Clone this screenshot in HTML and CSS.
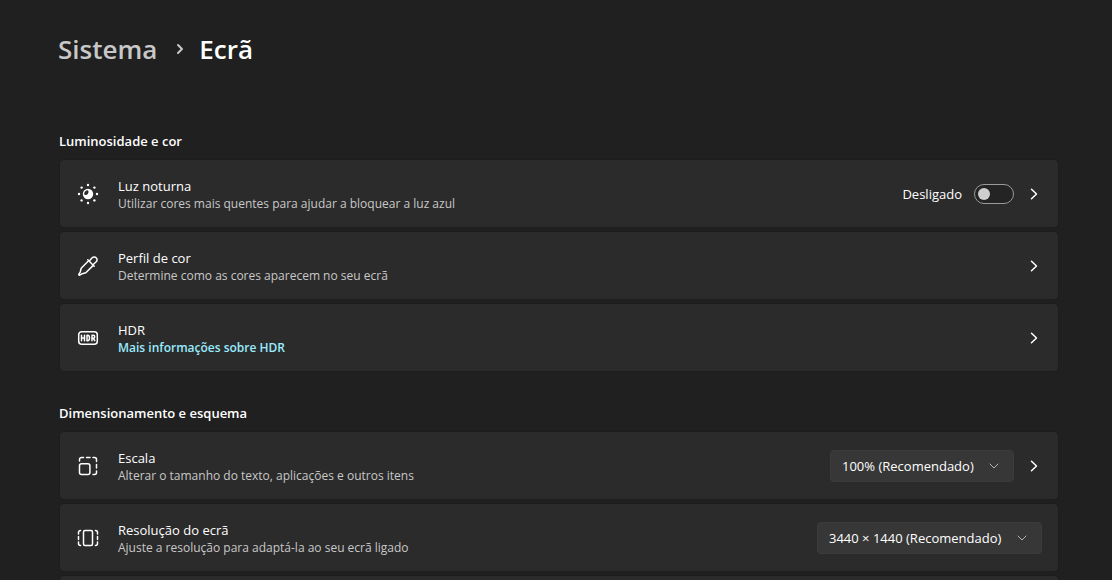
FILE: index.html
```html
<!DOCTYPE html>
<html lang="pt">
<head>
<meta charset="utf-8">
<meta name="viewport" content="width=device-width, initial-scale=1">
<title>Sistema › Ecrã</title>
<link rel="stylesheet" href="styles.css">
</head>
<body>
<main class="page">
  <nav class="breadcrumb">
    <a class="crumb" href="#sistema">Sistema</a>
    <svg class="crumb-arrow" viewBox="0 0 10 14" aria-hidden="true"><path d="M3 3l4 4-4 4"/></svg>
    <h1 class="crumb-current">Ecrã</h1>
  </nav>

  <section class="group">
    <h2 class="group-title">Luminosidade e cor</h2>
    <div class="card">
      <svg class="icon" viewBox="0 0 22 22" aria-hidden="true">
        <circle class="solid" cx="11" cy="11" r="5.2"/>
        <path class="shade" d="M11 7.200a3 3 0 0 1-3.800 4.400A3.800 3.800 0 0 1 11 7.200z"/>
        <g class="solid"><circle cx="11" cy="2" r="1.2"/><circle cx="11" cy="20" r="1.2"/><circle cx="2" cy="11" r="1.2"/><circle cx="20" cy="11" r="1.2"/><circle cx="4.6" cy="4.6" r="1.2"/><circle cx="17.4" cy="4.6" r="1.2"/><circle cx="4.6" cy="17.4" r="1.2"/><circle cx="17.4" cy="17.4" r="1.2"/></g>
      </svg>
      <div class="text">
        <label class="name" for="night">Luz noturna</label>
        <p class="desc">Utilizar cores mais quentes para ajudar a bloquear a luz azul</p>
      </div>
      <label class="state" for="night">Desligado</label>
      <input class="toggle" id="night" type="checkbox" role="switch">
      <button class="open" aria-label="Abrir luz noturna"><svg class="chevron" viewBox="0 0 8 12" aria-hidden="true"><path d="M1.5 1.2l5 4.8-5 4.8"/></svg></button>
    </div>
    <div class="card">
      <svg class="icon" viewBox="0 0 22 22" aria-hidden="true">
        <path d="M10.800 4.800l6.400 6.400M12.300 6l2.900-3.200a2.700 2.700 0 0 1 4 0 2.700 2.700 0 0 1 0 4L16 9.700"/>
        <path d="M11.600 5.800L4.200 13.200l-.9 3.600-1.600 2.800.7.700 2.800-1.600 3.600-.9 7.400-7.400"/>
      </svg>
      <div class="text">
        <h3 class="name">Perfil de cor</h3>
        <p class="desc">Determine como as cores aparecem no seu ecrã</p>
      </div>
      <button class="open" aria-label="Abrir perfil de cor"><svg class="chevron" viewBox="0 0 8 12" aria-hidden="true"><path d="M1.5 1.2l5 4.8-5 4.8"/></svg></button>
    </div>
    <div class="card">
      <svg class="icon" viewBox="0 0 22 22" aria-hidden="true">
        <rect x="1.700" y="4.700" width="18.600" height="12.600" rx="3"/>
        <path d="M4.500 8.300v5.400M7.500 8.300v5.400M4.500 11h3M10 8.300v5.400h.6c1.400 0 1.900-1.100 1.900-2.700s-.5-2.700-1.900-2.700zM15 13.700V8.300h1.200c2 0 2 3 0 3H15M16.300 11.300l1.500 2.400"/>
      </svg>
      <div class="text">
        <h3 class="name">HDR</h3>
        <p class="desc"><a class="link" href="#hdr">Mais informações sobre HDR</a></p>
      </div>
      <button class="open" aria-label="Abrir HDR"><svg class="chevron" viewBox="0 0 8 12" aria-hidden="true"><path d="M1.5 1.2l5 4.8-5 4.8"/></svg></button>
    </div>
  </section>

  <section class="group">
    <h2 class="group-title">Dimensionamento e esquema</h2>
    <div class="card">
      <svg class="icon" viewBox="0 0 22 22" aria-hidden="true">
        <rect x="2.500" y="8.800" width="10.400" height="10.700" rx="2"/>
        <path d="M2.500 6V4.500a2 2 0 0 1 2-2H6.500M9.500 2.500h3.500M16 2.500h1.500a2 2 0 0 1 2 2V6.500M19.500 9.500v3.500M19.500 16v1.500a2 2 0 0 1-2 2H16"/>
      </svg>
      <div class="text">
        <label class="name" for="scale">Escala</label>
        <p class="desc">Alterar o tamanho do texto, aplicações e outros itens</p>
      </div>
      <div class="picker">
        <select class="select" id="scale"><option>100% (Recomendado)</option></select>
        <svg class="caret" viewBox="0 0 10 6" aria-hidden="true"><path d="M1 1l4 4 4-4"/></svg>
      </div>
      <button class="open" aria-label="Abrir escala"><svg class="chevron" viewBox="0 0 8 12" aria-hidden="true"><path d="M1.5 1.2l5 4.8-5 4.8"/></svg></button>
    </div>
    <div class="card">
      <svg class="icon" viewBox="0 0 22 22" aria-hidden="true">
        <rect x="6.500" y="3.500" width="9" height="15" rx="1.500"/>
        <path d="M3.600 3.500h-.1a2 2 0 0 0-2 2V7M1.500 9.500v3M1.500 15v1.500a2 2 0 0 0 2 2h.1M18.400 3.500h.1a2 2 0 0 1 2 2V7M20.500 9.500v3M20.500 15v1.500a2 2 0 0 1-2 2h-.1"/>
      </svg>
      <div class="text">
        <label class="name" for="resolution">Resolução do ecrã</label>
        <p class="desc">Ajuste a resolução para adaptá-la ao seu ecrã ligado</p>
      </div>
      <div class="picker">
        <select class="select" id="resolution"><option>3440 × 1440 (Recomendado)</option></select>
        <svg class="caret" viewBox="0 0 10 6" aria-hidden="true"><path d="M1 1l4 4 4-4"/></svg>
      </div>
    </div>
    <div class="card"></div>
  </section>
</main>
</body>
</html>
```
FILE: styles.css
```css
* { box-sizing: border-box; }
html { height: 100%; overflow: hidden; background: #202020; }
body {
  margin: 0;
  height: 100%;
  overflow: hidden;
  background: #202020;
  color: #fff;
  font: 13px/20px "Open Sans", "Noto Sans", sans-serif;
}
h1, h2, h3, p { margin: 0; }
.page { padding: 30px 54px 0 60px; }
.breadcrumb {
  display: flex;
  align-items: center;
  height: 38px;
  margin: 0 0 63px -2px;
  font-size: 26px;
  line-height: 38px;
}
.crumb { color: #c8c8c8; font-weight: 600; text-decoration: none; }
.crumb-arrow { width: 10px; height: 14px; margin: 0 14px 0 18px; stroke: #c8c8c8; stroke-width: 2; }
.crumb-current { font-size: 26px; font-weight: 600; }
svg { flex: none; fill: none; stroke: #fff; stroke-width: 1.5; stroke-linecap: round; stroke-linejoin: round; }
.group { display: flex; flex-direction: column; gap: 5px; margin-bottom: 32px; }
.group-title { margin: 0 0 3px -1px; font-size: 13px; line-height: 21px; font-weight: 600; }
.card {
  display: flex;
  align-items: center;
  height: 67px;
  padding: 0 16px 0 17px;
  border-radius: 4px;
  background: #2b2b2b;
  box-shadow: 0 0 0 1px #1d1d1d;
}
.icon { width: 22px; height: 22px; margin-right: 19px; }
.solid { fill: #fff; stroke: none; }
.shade { fill: #2b2b2b; stroke: none; }
.text { flex: 1; min-width: 0; padding-top: 2px; }
.name { display: block; font-size: 13px; line-height: 18px; font-weight: 400; }
.desc { font-size: 12px; line-height: 17px; color: #c8c8c8; }
.link { color: #99ebff; font-weight: 600; text-decoration: none; }
.state { margin-right: 12px; }
.toggle {
  appearance: none;
  display: flex;
  align-items: center;
  width: 40px;
  height: 20px;
  margin: 0;
  padding: 0 3px;
  border: 1px solid #9a9a9a;
  border-radius: 10px;
  background: #242424;
}
.toggle::before { content: ""; width: 12px; height: 12px; border-radius: 50%; background: #cfcfcf; }
.toggle:checked { justify-content: flex-end; }
.open { display: flex; width: 16px; margin-left: 12px; padding: 4px; border: 0; background: none; }
.chevron { width: 8px; height: 12px; }
.picker { position: relative; }
.select {
  appearance: none;
  display: block;
  height: 32px;
  padding: 0 39px 0 11px;
  border: 1px solid #3c3c3c;
  border-radius: 4px;
  background: #373737;
  color: #fff;
  font: inherit;
}
.caret { position: absolute; top: 13px; right: 15px; width: 10px; height: 6px; stroke: #b4b4b4; stroke-width: 1; pointer-events: none; }
```
